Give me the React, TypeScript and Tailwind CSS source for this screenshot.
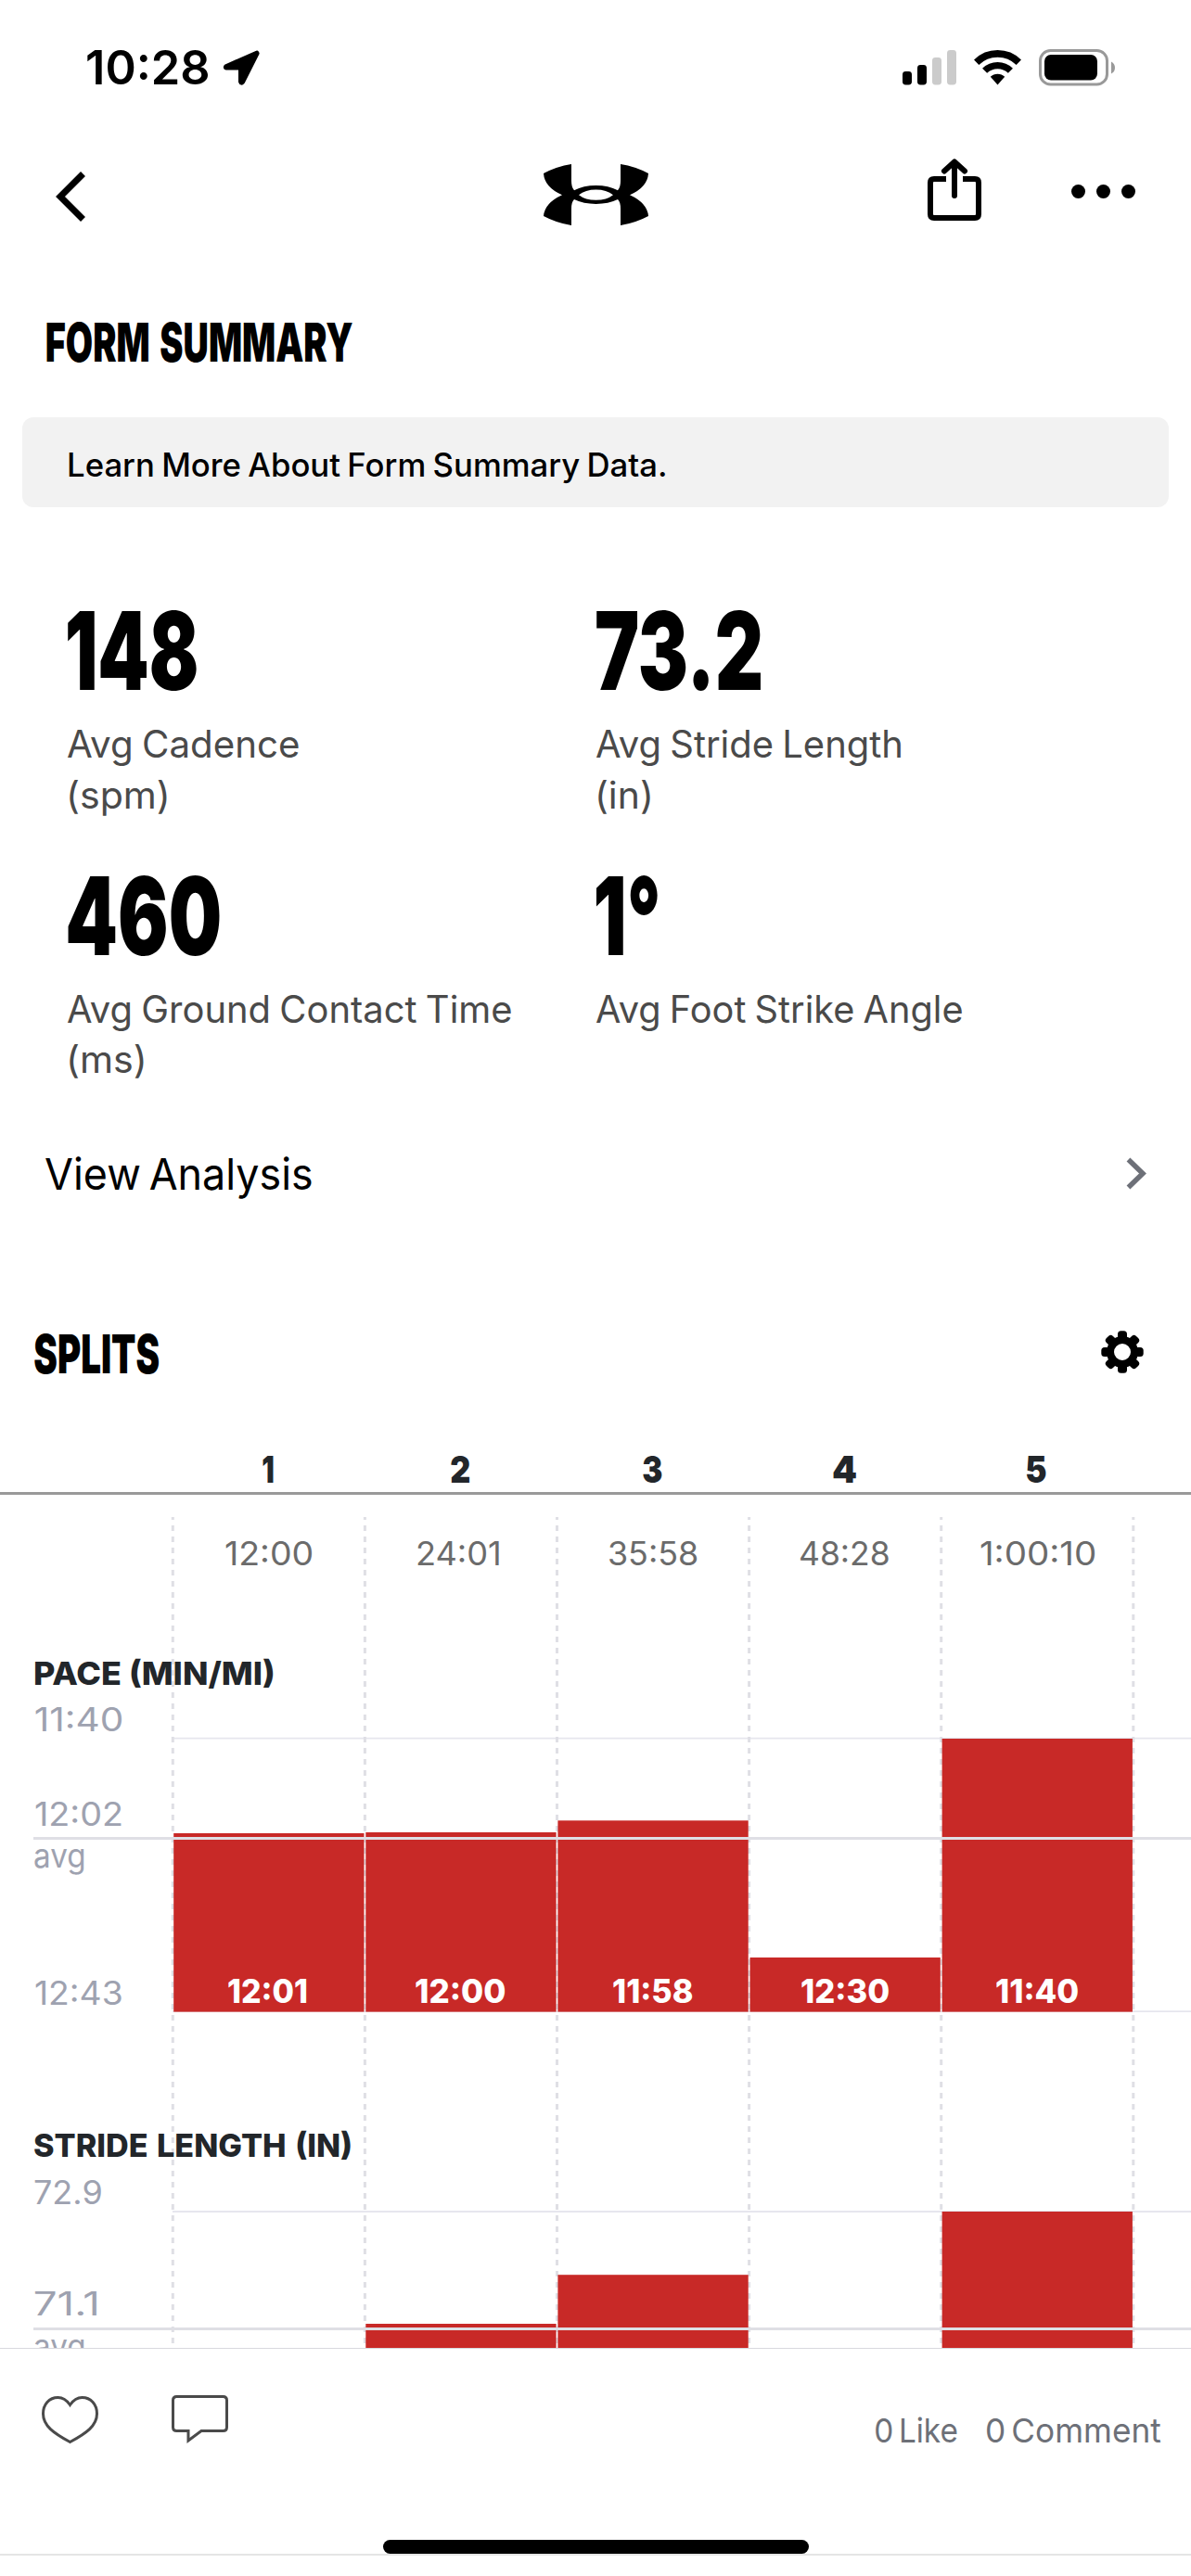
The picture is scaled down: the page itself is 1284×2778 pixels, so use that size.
import clsx from 'clsx';

type Cell = { text: string; x: number; w: number };

// column geometry of the splits chart
const FIRST_COL = 186.3;
const COL_WIDTH = 207.1;
const CHART_TOP = 1612;

const stats = [
  { value: '148', valueWidth: 139, lines: [['Avg Cadence', 249], ['(spm)', 105]] },
  { value: '73.2', valueWidth: 177, lines: [['Avg Stride Length', 328], ['(in)', 56]] },
  { value: '460', valueWidth: 164, lines: [['Avg Ground Contact Time', 478], ['(ms)', 80]] },
  { value: '1°', valueWidth: 66, lines: [['Avg Foot Strike Angle', 394]] },
] as { value: string; valueWidth: number; lines: [string, number][] }[];

const splitNumbers: Cell[] = [
  { text: '1', x: 97, w: 12 },
  { text: '2', x: 93, w: 20.5 },
  { text: '3', x: 92.7, w: 20.7 },
  { text: '4', x: 90.4, w: 25 },
  { text: '5', x: 92.4, w: 21 },
];

const splitTimes: Cell[] = [
  { text: '12:00', x: 57, w: 93 },
  { text: '24:01', x: 56.2, w: 88.5 },
  { text: '35:58', x: 56.4, w: 94.5 },
  { text: '48:28', x: 55.4, w: 95 },
  { text: '1:00:10', x: 42.5, w: 123 },
];

const paceLabels: Cell[] = [
  { text: '12:01', x: 60.2, w: 84.5 },
  { text: '12:00', x: 54.5, w: 96.2 },
  { text: '11:58', x: 60.5, w: 85.2 },
  { text: '12:30', x: 56.4, w: 94 },
  { text: '11:40', x: 59.4, w: 88 },
];

const bars = [
  { col: 0, top: 1977, bottom: 2169.6 },
  { col: 1, top: 1976, bottom: 2169.6 },
  { col: 2, top: 1963.3, bottom: 2169.6 },
  { col: 3, top: 2111, bottom: 2169.6 },
  { col: 4, top: 1875, bottom: 2169.6 },
  { col: 1, top: 2506, bottom: 2532 },
  { col: 2, top: 2453.2, bottom: 2532 },
  { col: 4, top: 2385, bottom: 2532 },
];

const ctx = document.createElement('canvas').getContext('2d')!;

// One line of Inter squeezed or stretched to a given ink width
function Fit({ text, w, size, weight = 400, space = 0, className }: {
  text: string;
  w: number;
  size: number;
  weight?: number;
  space?: number;
  className?: string;
}) {
  ctx.font = `${weight} ${size}px Inter`;
  ctx.wordSpacing = `${space}px`;
  const m = ctx.measureText(text);
  const scale = w / (m.actualBoundingBoxLeft + m.actualBoundingBoxRight);
  return (
    <span className={clsx('block shrink-0', className)} style={{ width: w }}>
      <span
        className="block w-max origin-left whitespace-nowrap"
        style={{
          fontSize: size,
          fontWeight: weight,
          wordSpacing: space,
          transform: `translateX(${m.actualBoundingBoxLeft * scale}px) scaleX(${scale})`,
        }}
      >
        {text}
      </span>
    </span>
  );
}

function CellRow({ cells, size, weight, className }: {
  cells: Cell[];
  size: number;
  weight?: number;
  className?: string;
}) {
  return (
    <div className={clsx('flex pl-[186.3px]', className)}>
      {cells.map((c, i) => (
        <div key={i} className="w-[207.1px] shrink-0" style={{ paddingLeft: c.x }}>
          <Fit text={c.text} w={c.w} size={size} weight={weight} className="leading-[40px]" />
        </div>
      ))}
    </div>
  );
}

function StatusBar() {
  return (
    <div className="flex h-[146px] items-center pr-[82px] pl-[94px]">
      <Fit text="10:28" w={131} size={51} weight={600} className="leading-[60px]" />
      <svg width="40" height="40" viewBox="0 0 40 40" className="ml-[15px]">
        <path
          d="M37 3.5 3.5 18.3 Q2 20.2 4 20.6 H19 V35 Q20 38 22 35.5 L37.6 4.5 Z"
          stroke="black"
          strokeWidth="4"
          strokeLinejoin="round"
        />
      </svg>
      <div className="ml-auto flex items-center gap-[19px]">
        <svg width="58" height="38" viewBox="0 0 58 38">
          <rect x="0" y="23" width="10" height="14.5" rx="3.4" />
          <rect x="16" y="16" width="10" height="21.5" rx="3.4" />
          <rect x="32" y="8" width="10" height="29.5" rx="3.4" fill="#cbcbcb" />
          <rect x="48" y="0" width="10" height="37.5" rx="3.4" fill="#cbcbcb" />
        </svg>
        <svg width="51" height="38" viewBox="0 0 51 38" fill="none" stroke="black">
          <path d="M2.7 13.2 A32.5 32.5 0 0 1 48.3 13.2" strokeWidth="7.6" />
          <path d="M11.6 22.3 A19.8 19.8 0 0 1 39.4 22.3" strokeWidth="7.2" />
          <path d="M25.5 37.5 L17.8 28.8 A11 11 0 0 1 33.2 28.8 Z" fill="black" stroke="none" />
        </svg>
        <svg width="82" height="40" viewBox="0 0 82 40">
          <rect x="1.5" y="1.5" width="72" height="36.5" rx="11" fill="none" stroke="#999" strokeWidth="3" />
          <rect x="6" y="6" width="57" height="27.5" rx="7" />
          <path d="M78 13.5 Q82 15.5 82 20 Q82 24.5 78 26.5Z" fill="#999" />
        </svg>
      </div>
    </div>
  );
}

function NavBar() {
  return (
    <div className="flex h-[130px] items-start pl-[60px]">
      <svg width="32" height="54" viewBox="0 0 32 54" className="mt-[39px]">
        <path d="M29.5 2.5 L5 27 L29.5 51.5" fill="none" stroke="black" strokeWidth="7" />
      </svg>
      <svg width="113" height="66" viewBox="0 0 113 66" className="mt-[31px] ml-[494px]">
        <path
          fillRule="evenodd"
          d="M0 10 Q14 2.5 30 0 V18 Q30 25 33 28.3 Q43 23 56.5 23 Q70 23 80 28.3 Q83 25 83 18 V0 Q99 2.5 113 10 Q112 25 93 33.2 Q112 42 113 56 Q99 63.5 83 66 V48 Q83 41 80 38.1 Q70 43 56.5 43 Q43 43 33 38.1 Q30 41 30 48 V66 Q14 63.5 0 56 Q1 42 20 33.2 Q1 25 0 10Z M38 33.2 Q45 38.8 56.5 38.8 Q68 38.8 75 33.2 Q68 27.5 56.5 27.5 Q45 27.5 38 33.2Z"
        />
      </svg>
      <svg width="58" height="67" viewBox="0 0 58 67" className="mt-[25px] ml-[301px]" fill="none" stroke="black" strokeWidth="6">
        <path d="M20 22 H7 Q3 22 3 26 V60 Q3 64 7 64 H51 Q55 64 55 60 V26 Q55 22 51 22 H38" />
        <path d="M29 5 V40 M18 13.5 L29 3.5 L40 13.5" strokeLinecap="round" strokeLinejoin="round" />
      </svg>
      <svg width="70" height="16" viewBox="0 0 70 16" className="mt-[52px] ml-[97px]">
        <circle cx="7.5" cy="8.5" r="7.5" />
        <circle cx="34.5" cy="8.5" r="7.5" />
        <circle cx="61.5" cy="8.5" r="7.5" />
      </svg>
    </div>
  );
}

function FormSummary() {
  return (
    <section>
      <h2 className="mt-[63px] pl-[50px]">
        <Fit text="FORM SUMMARY" w={330} size={58} weight={900} space={5} className="leading-[60px]" />
      </h2>
      <div className="mx-6 mt-[51px] h-[97px] rounded-xl bg-[#f2f2f2] pt-[21px] pl-[50px]">
        <Fit text="Learn More About Form Summary Data." w={643} size={35} weight={500} space={-2} className="leading-[60px]" />
      </div>
      <div className="mt-[105px] grid grid-cols-[570px_1fr] gap-y-[53.5px] pl-[73px]">
        {stats.map((s) => (
          <div key={s.value} className="h-[232px]">
            <Fit text={s.value} w={s.valueWidth} size={117} weight={900} className="leading-[100px]" />
            <div className="mt-6 text-[#4a4a4a]">
              {s.lines.map(([text, w]) => (
                <Fit
                  key={text}
                  text={text}
                  w={w}
                  size={40.5}
                  space={-2}
                  className={clsx('leading-[54.5px]', text.startsWith('(') && 'ml-[2px]')}
                />
              ))}
            </div>
          </div>
        ))}
      </div>
      <div className="mt-[66.5px] flex items-center justify-between pr-12 pl-[49px]">
        <Fit text="View Analysis" w={287} size={47} space={-4} className="leading-[60px]" />
        <svg width="22" height="36" viewBox="0 0 22 36" fill="none" stroke="#6d7078" strokeWidth="5.5">
          <path d="M2.5 2.5 L18 17.5 L2.5 32.5" />
        </svg>
      </div>
    </section>
  );
}

function GearIcon() {
  return (
    <svg width="46" height="46" viewBox="-23 -23 46 46">
      <circle r="13" fill="none" stroke="black" strokeWidth="8" />
      {[0, 45, 90, 135, 180, 225, 270, 315].map((a) => (
        <rect key={a} x="-5" y="-22.7" width="10" height="10" rx="3.5" transform={`rotate(${a})`} />
      ))}
    </svg>
  );
}

function ChartCanvas() {
  return (
    <svg width="1284" height="920" viewBox={`0 ${CHART_TOP} 1284 920`} className="absolute inset-0">
      {[1874.7, 2169.2, 2385].map((y) => (
        <path key={y} d={`M186 ${y} H1284`} stroke="#e6e6ee" strokeWidth="1.8" />
      ))}
      {[0, 1, 2, 3, 4, 5].map((i) => (
        <path
          key={i}
          d={`M${FIRST_COL + i * COL_WIDTH} 1636 V2527`}
          stroke="#dfdfe5"
          strokeWidth="3"
          strokeDasharray="6 6"
          strokeDashoffset="3"
        />
      ))}
      {bars.map((b, i) => (
        <rect
          key={i}
          x={FIRST_COL + b.col * COL_WIDTH + 0.9}
          y={b.top}
          width={205.3}
          height={b.bottom - b.top}
          fill="#c82927"
        />
      ))}
      <path d="M36 1982.500 H1284 M36 2511.500 H1284" stroke="#dfdfe5" strokeWidth="3" />
    </svg>
  );
}

function Splits() {
  return (
    <section className="mt-[134px]">
      <div className="flex items-start justify-between pr-[51px] pl-[37px]">
        <Fit text="SPLITS" w={134} size={58} weight={900} className="leading-[60px]" />
        <div className="mt-[5px]">
          <GearIcon />
        </div>
      </div>
      <CellRow cells={splitNumbers} size={40} weight={900} className="mt-[75px] h-[44px] text-[#22262a]" />
      <div className="h-[3px] bg-[#999]" />
      <div className="relative h-[920px] overflow-hidden">
        <ChartCanvas />
        <div className="relative text-[#9ea2b0]">
          <CellRow cells={splitTimes} size={35} className="pt-[43px] text-[#6b6b6b]" />
          <h3 className="mt-[90px] pl-[37px] text-[#22262a]">
            <Fit text="PACE (MIN/MI)" w={257.5} size={34.5} weight={800} className="leading-[40px]" />
          </h3>
          <Fit text="11:40" w={93} size={35} className="mt-[9px] ml-[38px] leading-[40px]" />
          <Fit text="12:02" w={92.5} size={35} className="mt-[62px] ml-[38px] leading-[40px]" />
          <Fit text="avg" w={54} size={35.5} className="mt-[6px] ml-[37px] leading-[40px]" />
          <div className="mt-[105px] flex h-[43px]">
            <Fit text="12:43" w={93} size={35} className="mt-[2px] ml-[38px] leading-[40px]" />
            <CellRow cells={paceLabels} size={35} weight={800} className="-ml-[131px] text-white" />
          </div>
          <h3 className="mt-[124px] pl-[37px] text-[#22262a]">
            <Fit text="STRIDE LENGTH (IN)" w={341} size={34.5} weight={800} space={2} className="leading-[40px]" />
          </h3>
          <Fit text="72.9" w={72} size={35} className="mt-[10px] ml-[37px] leading-[40px]" />
          <Fit text="71.1" w={68} size={35} className="mt-[80px] ml-[37px] leading-[40px]" />
          <Fit text="avg" w={54} size={35.5} className="mt-[7px] ml-[37px] leading-[40px]" />
        </div>
      </div>
    </section>
  );
}

function Footer() {
  return (
    <footer className="flex h-[246px] flex-col border-t border-[#d8d8de]">
      <div className="flex h-[206px] items-start pt-[50px] pl-[45px] text-[#6d7078]">
        <svg width="61" height="53" viewBox="0 0 61 53" fill="none" stroke="#4a4a4a" strokeWidth="3">
          <path d="M30.5 10.5 C26 4 21.5 2.5 17.5 2.5 C8 2.5 1.5 10 1.5 20 C1.5 33 13 41 30.5 50.5 C48 41 59.5 33 59.5 20 C59.5 10 53 2.5 43.5 2.5 C39.5 2.5 35 4 30.5 10.5 Z" />
        </svg>
        <svg width="61" height="53" viewBox="0 0 61 53" fill="none" stroke="#4a4a4a" strokeWidth="3" className="ml-[79px]">
          <path d="M5.5 1.5 H55.5 Q59.5 1.5 59.5 5.5 V34.5 Q59.5 38.5 55.5 38.5 H32 L18 49 V38.5 H5.5 Q1.5 38.5 1.5 34.5 V5.5 Q1.5 1.5 5.5 1.5 Z" />
        </svg>
        <div className="mt-[18px] ml-auto flex gap-[32px] pr-8 leading-[40px]">
          <Fit text="0 Like" w={88} size={36} space={-4} />
          <Fit text="0 Comment" w={188} size={36} space={-4} />
        </div>
      </div>
      <div className="mx-auto h-[15px] w-[459px] rounded-full bg-black" />
      <div className="h-[2px] bg-[#e5e5e5]" />
    </footer>
  );
}

export default function App() {
  return (
    <div className="h-[2778px] w-[1284px] overflow-hidden bg-white font-['Inter',sans-serif] text-black">
      <StatusBar />
      <NavBar />
      <FormSummary />
      <Splits />
      <Footer />
    </div>
  );
}
